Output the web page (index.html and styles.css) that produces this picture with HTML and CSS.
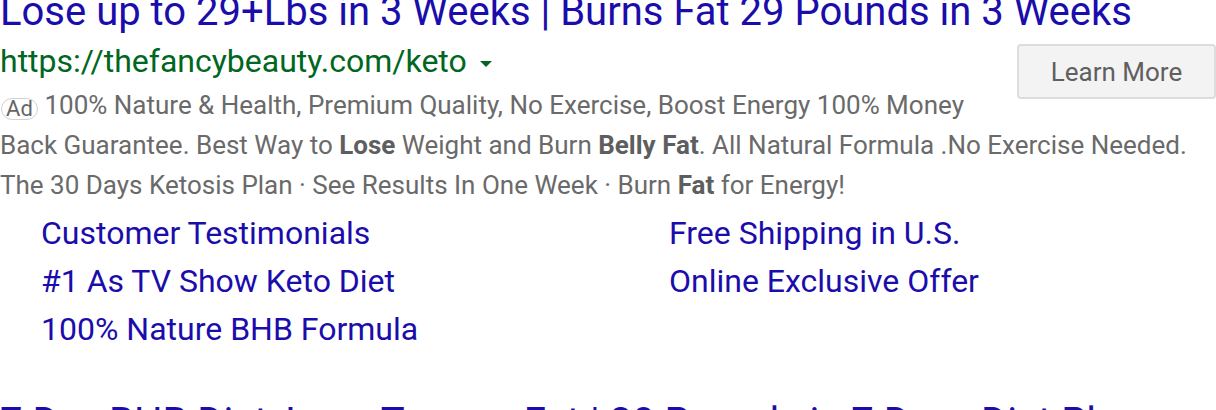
FILE: index.html
```html
<!DOCTYPE html>
<html>
<head>
<meta charset="utf-8">
<link rel="stylesheet" href="styles.css">
</head>
<body>
<div class="result">
  <a class="title" href="#">Lose up to 29+Lbs in 3 Weeks | Burns Fat 29 Pounds in 3 Weeks</a>
  <div class="meta">
    <button class="learn">Learn More</button>
    <div class="url">https://thefancybeauty.com/keto<span class="caret"></span></div>
    <div class="desc"><span class="ad">Ad</span> 100% Nature &amp; Health, Premium Quality, No Exercise, Boost Energy 100% Money<br>Back Guarantee. Best Way to <b>Lose</b> Weight and Burn <b>Belly Fat</b>. All Natural Formula .No Exercise Needed.<br>The 30 Days Ketosis Plan · See Results In One Week · Burn <b>Fat</b> for Energy!</div>
  </div>
  <div class="sitelinks">
    <a href="#">Customer Testimonials</a>
    <a href="#">Free Shipping in U.S.</a>
    <a href="#">#1 As TV Show Keto Diet</a>
    <a href="#">Online Exclusive Offer</a>
    <a href="#">100% Nature BHB Formula</a>
  </div>
</div>
<div class="result next">
  <a class="title" href="#">7 Day BHB Diet, Lose Tummy Fat | 30 Pounds in 7 Days Diet Plan</a>
</div>
</body>
</html>
```
FILE: styles.css
```css
html, body {
  margin: 0;
  padding: 0;
  background: #fff;
  overflow: hidden;
}
body {
  font-family: Roboto, "Liberation Sans", Arial, sans-serif;
  width: 1216px;
  height: 410px;
}
a { text-decoration: none; }
.result {
  margin-top: -12px;
}
.title {
  display: block;
  color: #1a0dab;
  font-size: 40px;
  line-height: 48px;
  white-space: nowrap;
}
.meta {
  margin-top: 5px;
}
.url {
  color: #006621;
  font-size: 32px;
  line-height: 40px;
  white-space: nowrap;
}
.caret {
  display: inline-block;
  width: 0;
  height: 0;
  border-left: 6px solid transparent;
  border-right: 6px solid transparent;
  border-top: 6px solid #006621;
  vertical-align: 5px;
  margin-left: 13px;
}
.learn {
  float: right;
  margin-top: 3px;
  margin-left: 20px;
  width: 199px;
  height: 55px;
  padding: 0;
  background: #f3f3f3;
  border: 2px solid #dddddd;
  border-radius: 4px;
  font-family: Roboto, sans-serif;
  font-size: 26px;
  color: #5f5f5f;
}
.desc {
  color: #6a6a6a;
  font-size: 26px;
  line-height: 40px;
  margin-top: 4px;
  white-space: nowrap;
}
.desc b { color: #5e5e5e; font-weight: 700; }
.ad {
  display: inline-block;
  box-sizing: border-box;
  width: 37px;
  height: 22px;
  border: 1.5px solid #d2d2d2;
  border-radius: 11px;
  font-size: 22px;
  line-height: 19px;
  text-align: center;
  color: #666;
  margin-left: 1px;
  vertical-align: -2px;
}
.sitelinks {
  display: grid;
  grid-template-columns: 628px 1fr;
  padding-left: 41px;
  margin-top: 4px;
}
.sitelinks a {
  color: #1a0dab;
  font-size: 32px;
  line-height: 48px;
  white-space: nowrap;
}
.next {
  margin-top: 46px;
}
```
